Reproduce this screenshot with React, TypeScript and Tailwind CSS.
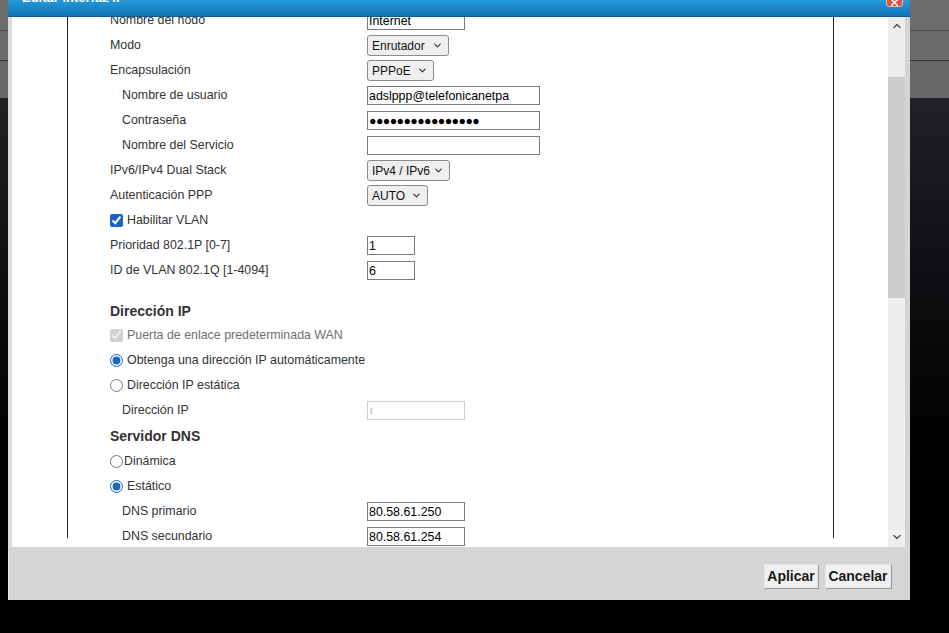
import { ChevronDown, ChevronUp, X } from "lucide-react";
import type { ReactNode } from "react";

const Row = ({ label, indent, children }: { label: ReactNode; indent?: boolean; children?: ReactNode }) => (
  <div className="flex h-[25px] items-center">
    <div className={indent ? "w-[257px] pl-[12px]" : "w-[257px]"}>{label}</div>
    {children}
  </div>
);

const Select = ({ value, w }: { value: string; w: string }) => (
  <div className={`flex h-[21px] items-center justify-between rounded-[3px] border border-[#8a8a8a] bg-[#efefef] pl-[4px] pr-[5px] text-[12px] text-[#111] ${w}`}>
    <span>{value}</span>
    <ChevronDown size={11} strokeWidth={2.5} className="text-[#333]" />
  </div>
);

const Field = ({ value, w, dots }: { value: string; w: string; dots?: boolean }) => (
  <input
    type="text"
    defaultValue={value}
    readOnly
    className={`h-[19px] border border-[#7a7a7a] bg-white px-[1px] text-[12.4px] text-black outline-none ${dots ? "tracking-[-0.6px]" : ""} ${w}`}
  />
);

const Check = ({ label, disabled, radio, checked, gap = "ml-[4px]" }: { label: string; disabled?: boolean; radio?: boolean; checked?: boolean; gap?: string }) => (
  <div className="flex h-[25px] items-center">
    <input
      type={radio ? "radio" : "checkbox"}
      defaultChecked={checked}
      disabled={disabled}
      className="m-0 h-[13px] w-[13px] accent-[#1a66c8]"
    />
    <span className={`${gap} ${disabled ? "text-[#707070]" : ""}`}>{label}</span>
  </div>
);

export default function App() {
  return (
    <div className="relative h-[633px] w-[949px] overflow-hidden bg-black font-['Liberation_Sans',Arial,sans-serif]">
      {/* page behind the dialog */}
      <div className="flex h-full flex-col">
        <div className="h-[31px] border-b border-[#4e4e4e] bg-[#6d6d6d]" />
        <div className="h-[30px] border-b border-[#353535] bg-[#6a6a6a]" />
        <div className="h-[37px] bg-[#686868]" />
        <div className="flex-1 bg-gradient-to-b from-[#202226] to-black" />
      </div>

      {/* dialog */}
      <div className="absolute left-[8px] top-0 flex h-[600px] w-[902px] flex-col bg-[#d5d5d5]">
        <div className="relative h-[17px] shrink-0 overflow-hidden border-b border-[#0b5e95] bg-gradient-to-b from-[#239ad9] to-[#0f74b8] pl-[14px]">
          <span className="-mt-[10px] block text-[13px] font-bold leading-[16px] text-white">Editar interfaz IP</span>
        </div>
        <div className="absolute right-[7px] -top-[8px] flex h-[15px] w-[17px] items-center justify-center rounded-[3px] border border-[#f3b4a8] bg-[#dc5442]">
          <X size={11} strokeWidth={3} className="mt-[5px] text-white" />
        </div>

        <div className="flex h-[530px] shrink-0">
          <div className="w-[4px] bg-[#dcdcdc]" />
          <div className="flex-1 overflow-hidden bg-white pl-[55px] pr-[54px]">
            <div className="h-full border-x border-[#222]">
              <div className="-mt-[9px] pl-[42px] text-[12.4px] text-[#333]">
                <Row label="Nombre del nodo"><Field value="Internet" w="w-[98px]" /></Row>
                <Row label="Modo"><Select value="Enrutador" w="w-[82px]" /></Row>
                <Row label="Encapsulación"><Select value="PPPoE" w="w-[67px]" /></Row>
                <Row label="Nombre de usuario" indent><Field value="adslppp@telefonicanetpa" w="w-[173px]" /></Row>
                <Row label="Contraseña" indent><Field value="●●●●●●●●●●●●●●●●" dots w="w-[173px]" /></Row>
                <Row label="Nombre del Servicio" indent><Field value="" w="w-[173px]" /></Row>
                <Row label="IPv6/IPv4 Dual Stack"><Select value="IPv4 / IPv6" w="w-[83px]" /></Row>
                <Row label="Autenticación PPP"><Select value="AUTO" w="w-[61px]" /></Row>
                <Check label="Habilitar VLAN" checked />
                <Row label="Prioridad 802.1P [0-7]"><Field value="1" w="w-[48px]" /></Row>
                <Row label="ID de VLAN 802.1Q [1-4094]"><Field value="6" w="w-[48px]" /></Row>

                <div className="flex h-[40px] items-end pb-[1px] text-[14px] font-bold">Dirección IP</div>
                <Check label="Puerta de enlace predeterminada WAN" checked disabled />
                <Check label="Obtenga una dirección IP automáticamente" radio checked />
                <Check label="Dirección IP estática" radio />
                <Row label="Dirección IP" indent>
                  <div className="flex h-[19px] w-[98px] items-center border border-[#cfcfcf] px-[2px] text-[11px] text-[#aaa]">ι</div>
                </Row>

                <div className="flex h-[26px] items-center text-[14px] font-bold">Servidor DNS</div>
                <Check label="Dinámica" radio gap="ml-[1px]" />
                <Check label="Estático" radio checked />
                <Row label="DNS primario" indent><Field value="80.58.61.250" w="w-[98px]" /></Row>
                <Row label="DNS secundario" indent><Field value="80.58.61.254" w="w-[98px]" /></Row>
                <Row label="" indent />
              </div>
            </div>
          </div>
          {/* scrollbar */}
          <div className="flex w-[17px] flex-col">
            <div className="flex h-[60px] justify-center bg-[#ededed] pt-[3px]">
              <ChevronUp size={12} strokeWidth={3} className="text-[#555]" />
            </div>
            <div className="h-[221px] bg-[#cdcdcd]" />
            <div className="flex flex-1 items-end justify-center bg-[#eeeeee] pb-[4px]">
              <ChevronDown size={12} strokeWidth={3} className="text-[#555]" />
            </div>
          </div>
          <div className="w-[5px] bg-[#d4d4d4]" />
        </div>

        <div className="flex flex-1 items-start justify-end gap-[7px] border-l-[1px] border-[#e4e4e4] pr-[19px] pt-[17px]">
          <button className="h-[24px] w-[54px] border border-[#e6e6e6] bg-[#f0f0f0] text-[14px] font-bold text-[#1a1a1a] shadow-[1px_1px_0_#9a9a9a]">Aplicar</button>
          <button className="h-[24px] w-[66px] border border-[#e6e6e6] bg-[#f0f0f0] text-[14px] font-bold text-[#1a1a1a] shadow-[1px_1px_0_#9a9a9a]">Cancelar</button>
        </div>
      </div>
    </div>
  );
}
